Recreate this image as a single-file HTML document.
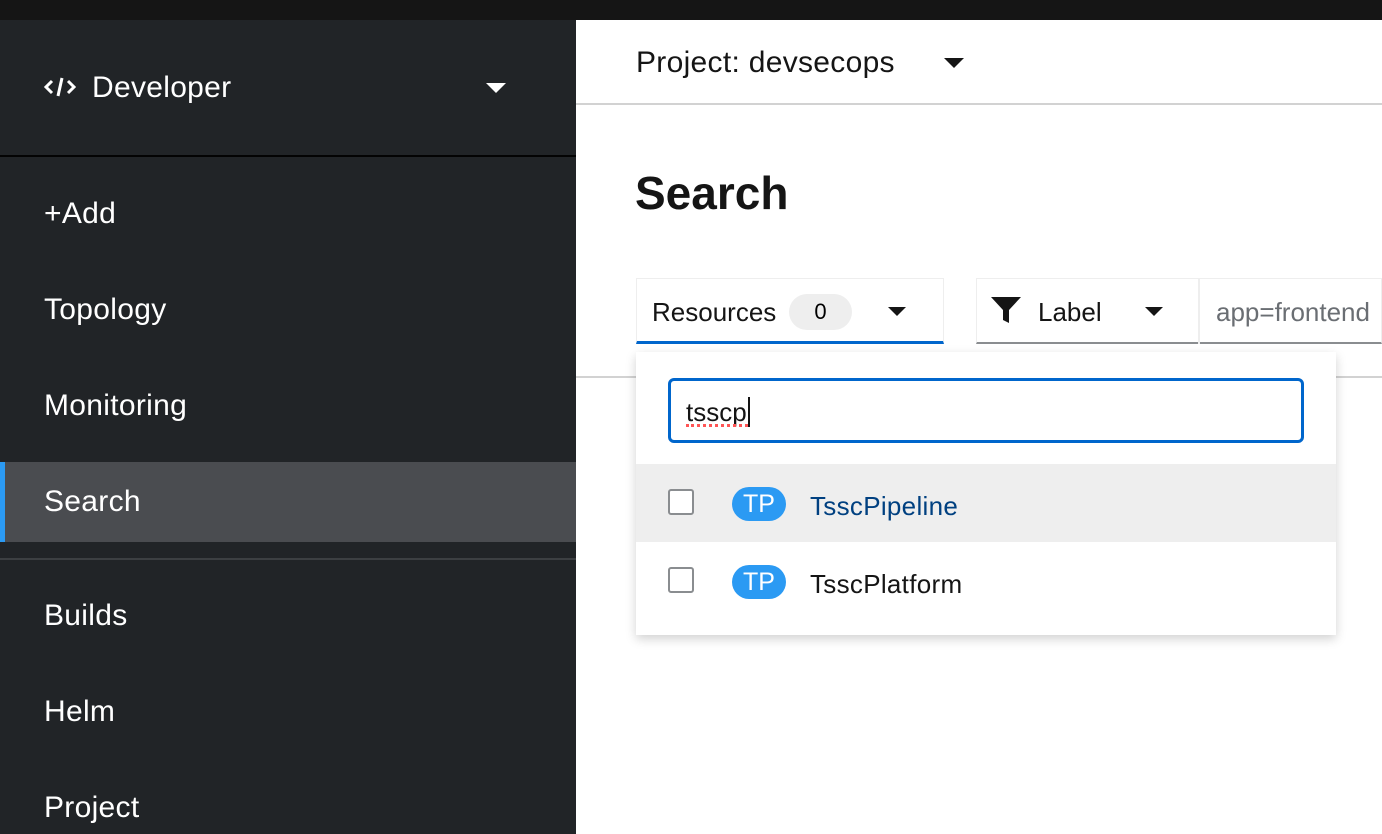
<!DOCTYPE html>
<html><head><style>
*{margin:0;padding:0;box-sizing:border-box}
body{width:1382px;height:834px;overflow:hidden;font-family:"Liberation Sans",sans-serif;background:#fff;position:relative}
.top{position:absolute;left:0;top:0;width:1382px;height:20px;background:#151515}
.side{position:absolute;left:0;top:20px;width:576px;height:814px;background:#212427;color:#fff}
.a{position:absolute;font-size:30px;color:#fff;letter-spacing:0.3px}
.abs{position:absolute}
</style></head><body>
<div class="top"></div>
<div class="side">
 <svg class="abs" style="left:44px;top:56px" width="32" height="22" viewBox="0 0 32 22"><path d="M8 5 L2 11 L8 17 M24 5 L30 11 L24 17" stroke="#fff" stroke-width="3" fill="none"/><path d="M18 2 L14 20" stroke="#fff" stroke-width="3"/></svg>
 <div class="a" style="left:92px;top:51px">Developer</div>
 <div class="abs" style="left:486px;top:63px;border-left:10px solid transparent;border-right:10px solid transparent;border-top:10px solid #fff"></div>
 <div class="abs" style="left:0;top:135px;width:576px;height:2px;background:#030303"></div>
 <div class="a" style="left:44px;top:177px">+Add</div>
 <div class="a" style="left:44px;top:273px">Topology</div>
 <div class="a" style="left:44px;top:369px">Monitoring</div>
 <div class="abs" style="left:0;top:442px;width:576px;height:80px;background:#4a4c50"></div>
 <div class="abs" style="left:0;top:442px;width:5px;height:80px;background:#2b9af3"></div>
 <div class="a" style="left:44px;top:465px">Search</div>
 <div class="abs" style="left:0;top:538px;width:576px;height:2px;background:#3c3f42"></div>
 <div class="a" style="left:44px;top:579px">Builds</div>
 <div class="a" style="left:44px;top:675px">Helm</div>
 <div class="a" style="left:44px;top:771px">Project</div>
</div>
<div class="abs" style="left:636px;top:46px;font-size:30px;color:#151515;letter-spacing:0.3px">Project: devsecops</div>
<div class="abs" style="left:944px;top:58px;border-left:10px solid transparent;border-right:10px solid transparent;border-top:10px solid #151515"></div>
<div class="abs" style="left:576px;top:103px;width:806px;height:2px;background:#d2d2d2"></div>
<div class="abs" style="left:635px;top:166px;font-size:46px;font-weight:bold;color:#151515">Search</div>
<div class="abs" style="left:636px;top:278px;width:308px;height:66px;border:1px solid #eee;border-bottom:3px solid #06c"></div>
<div class="abs" style="left:652px;top:297px;font-size:26px;color:#151515">Resources</div>
<div class="abs" style="left:789px;top:294px;width:63px;height:36px;border-radius:18px;background:#eee;font-size:22px;text-align:center;line-height:36px">0</div>
<div class="abs" style="left:888px;top:307px;border-left:9px solid transparent;border-right:9px solid transparent;border-top:9px solid #151515"></div>
<div class="abs" style="left:976px;top:278px;width:406px;height:66px;border:1px solid #eee;border-bottom:2px solid #8a8d90"></div>
<div class="abs" style="left:1198px;top:278px;width:2px;height:66px;background:#eee"></div>
<svg class="abs" style="left:990px;top:296px" width="32" height="28" viewBox="0 0 32 28"><path d="M1 1 H31 L19 14 V27 L13 24 V14 Z" fill="#151515"/></svg>
<div class="abs" style="left:1038px;top:297px;font-size:26px;color:#151515">Label</div>
<div class="abs" style="left:1145px;top:307px;border-left:9px solid transparent;border-right:9px solid transparent;border-top:9px solid #151515"></div>
<div class="abs" style="left:1216px;top:297px;font-size:26px;color:#6a6e73;white-space:nowrap">app=frontend</div>
<div class="abs" style="left:576px;top:376px;width:806px;height:2px;background:#d2d2d2"></div>
<div class="abs" style="left:636px;top:352px;width:700px;height:283px;background:#fff;box-shadow:0 4px 10px rgba(0,0,0,.18)"></div>
<div class="abs" style="left:668px;top:378px;width:636px;height:65px;border:3px solid #06c;border-radius:6px"></div>
<div class="abs" style="left:686px;top:397px;font-size:26px;color:#151515">tsscp<span style="border-left:2px solid #151515;margin-left:1px"></span></div>
<div class="abs" style="left:686px;top:424px;width:62px;border-bottom:3px dotted #f55"></div>
<div class="abs" style="left:636px;top:464px;width:700px;height:78px;background:#eee"></div>
<div class="abs" style="left:668px;top:489px;width:26px;height:26px;border:2px solid #8a8d90;border-radius:3px;background:#fff"></div>
<div class="abs" style="left:732px;top:487px;width:54px;height:34px;border-radius:17px;background:#2b9af3;color:#fff;font-size:25px;text-align:center;line-height:34px">TP</div>
<div class="abs" style="left:810px;top:491px;font-size:26px;color:#004080;letter-spacing:0.3px">TsscPipeline</div>
<div class="abs" style="left:668px;top:567px;width:26px;height:26px;border:2px solid #8a8d90;border-radius:3px;background:#fff"></div>
<div class="abs" style="left:732px;top:565px;width:54px;height:34px;border-radius:17px;background:#2b9af3;color:#fff;font-size:25px;text-align:center;line-height:34px">TP</div>
<div class="abs" style="left:810px;top:569px;font-size:26px;color:#151515;letter-spacing:0.3px">TsscPlatform</div>
</body></html>
